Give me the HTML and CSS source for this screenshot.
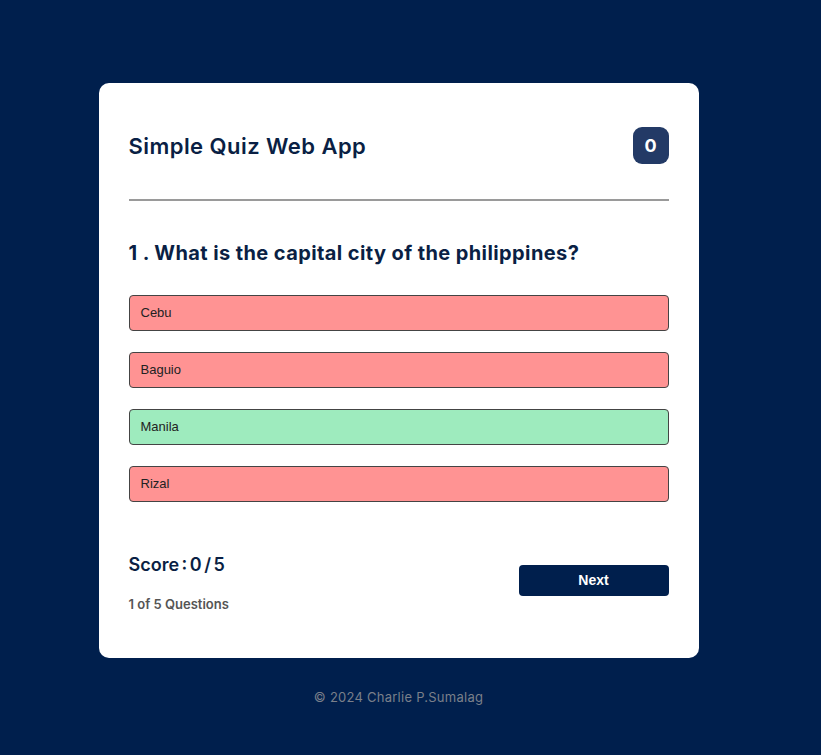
FILE: index.html
```html
<!DOCTYPE html>
<html lang="en">
<head>
<meta charset="utf-8">
<title>Simple Quiz Web App</title>
<link rel="stylesheet" href="styles.css">
</head>
<body>
<main class="page">
  <section class="card">
    <header class="card-header">
      <h1 class="title">Simple Quiz Web App</h1>
      <span class="badge">0</span>
    </header>
    <hr class="divider">
    <h2 class="question">1 . What is the capital city of the philippines?</h2>
    <div class="options">
      <button class="option wrong">Cebu</button>
      <button class="option wrong">Baguio</button>
      <button class="option right">Manila</button>
      <button class="option wrong">Rizal</button>
    </div>
    <div class="card-footer">
      <div class="stats">
        <div class="score">Score : 0 / 5</div>
        <div class="count">1 of 5 Questions</div>
      </div>
      <button class="next">Next</button>
    </div>
  </section>
  <footer class="credit">© 2024 Charlie P.Sumalag</footer>
</main>
</body>
</html>
```
FILE: styles.css
```css
* { box-sizing: border-box; }
html, body { margin: 0; padding: 0; }
body {
  background: #001f4d;
  font-family: "Inter", "Lato", sans-serif;
  min-height: 755px;
}
.page {
  display: flex;
  flex-direction: column;
  align-items: center;
  padding-top: 83px;
  padding-right: 24px;
}
.card {
  width: 600px;
  height: 575px;
  background: #ffffff;
  border-radius: 10px;
  padding: 44px 30px 0 30px;
}
.card-header {
  display: flex;
  justify-content: space-between;
  align-items: center;
  height: 37px;
}
.title {
  margin: 0;
  font-size: 22px;
  font-weight: 600;
  color: #0a1f44;
  letter-spacing: 0.45px;
}
.badge {
  width: 36px;
  height: 37px;
  border-radius: 9px;
  background: #233a66;
  color: #ffffff;
  font-size: 18px;
  font-weight: 700;
  display: flex;
  align-items: center;
  justify-content: center;
}
.divider {
  margin: 35px 0 0 0;
  border: none;
  height: 2px;
  background: #9a9a9a;
}
.question {
  margin: 37px 0 0 0;
  font-size: 20px;
  line-height: 30px;
  font-weight: 700;
  color: #0a1f44;
  letter-spacing: 0.4px;
}
.options {
  display: flex;
  flex-direction: column;
  gap: 21px;
  margin-top: 27px;
}
.option {
  display: block;
  width: 100%;
  height: 36px;
  text-align: left;
  padding: 0 11px 1px 11px;
  border: 1px solid #444;
  border-radius: 4px;
  font-family: "Liberation Sans", Arial, sans-serif;
  font-size: 13px;
  color: #222;
}
.wrong { background: #ff9393; }
.right { background: #9eebbe; }
.card-footer {
  display: flex;
  justify-content: space-between;
  align-items: flex-start;
  margin-top: 51px;
}
.score {
  font-size: 18px;
  line-height: 24px;
  font-weight: 600;
  color: #0a1f44;
  word-spacing: -2px;
}
.count {
  margin-top: 19px;
  font-size: 13px;
  font-weight: 600;
  color: #555;
}
.next {
  margin-top: 12px;
  width: 150px;
  height: 31px;
  border: none;
  border-radius: 4px;
  background: #001f4d;
  color: #fff;
  font-family: "Liberation Sans", Arial, sans-serif;
  font-weight: 700;
  font-size: 14px;
  padding-bottom: 2px;
}
.credit {
  margin-top: 31px;
  font-size: 13px;
  color: #7a7f8a;
  letter-spacing: 0.25px;
}
```
